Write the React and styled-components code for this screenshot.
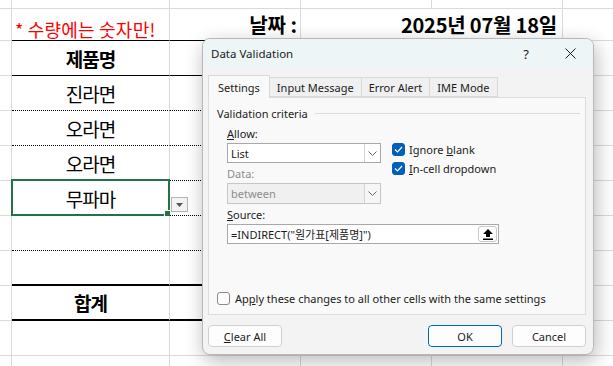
import styled, { createGlobalStyle } from 'styled-components'

const GlobalStyle = createGlobalStyle`
  html, body {
    margin: 0;
    padding: 0;
    background: #fff;
    overflow: hidden;
  }
  #root {
    position: relative;
    width: 613px;
    height: 366px;
    overflow: hidden;
  }
`

const GRID = '#dadada'

const bottoms = {
  grid: `1px solid ${GRID}`,
  thin: '1px solid #000',
  dot: '1px dotted #000',
  thick: '2px solid #000',
}

const Sheet = styled.div`
  display: grid;
  grid-template-columns: 12px 158px 131px 131px 131px 60px;
  grid-template-rows: 9px 32px repeat(9, 35px) 20px;
  font-family: "Noto Sans CJK KR", "Noto Sans", sans-serif;
  color: #000;
`

const Cell = styled.div`
  position: relative;
  box-sizing: border-box;
  grid-column: span ${p => p.$span || 1};
  border-right: 1px solid ${GRID};
  border-bottom: ${p => bottoms[p.$bottom || 'grid']};
  display: flex;
  align-items: ${p => p.$valign || 'center'};
  justify-content: ${p => p.$align || 'center'};
  padding: ${p => p.$pad || '0'};
  font-size: ${p => p.$size || 19}px;
  letter-spacing: ${p => (p.$spacing ?? -1)}px;
  font-weight: ${p => (p.$bold ? 700 : 400)};
  color: ${p => p.$color || '#000'};
  white-space: nowrap;
  line-height: 1;
`

const Selection = styled.div`
  position: absolute;
  top: -2px;
  left: -1px;
  right: -1px;
  bottom: -1px;
  border: 2px solid #217346;
  pointer-events: none;
`

const FillHandle = styled.div`
  position: absolute;
  right: -3px;
  bottom: -3px;
  width: 5px;
  height: 5px;
  background: #217346;
  border: 1px solid #fff;
`

const DropButton = styled.div`
  position: absolute;
  left: calc(100% + 2px);
  bottom: 3px;
  width: 17px;
  height: 15px;
  box-sizing: border-box;
  background: #f3f3f3;
  border: 1px solid #b4b4b4;
  display: flex;
  align-items: center;
  justify-content: center;
`

const Dialog = styled.div`
  position: absolute;
  left: 202px;
  top: 38px;
  width: 392px;
  height: 317px;
  box-sizing: border-box;
  border: 1px solid #b8b8b8;
  border-radius: 8px;
  background: #f3f3f3;
  box-shadow: 2px 6px 20px rgba(0, 0, 0, 0.28);
  display: flex;
  flex-direction: column;
  overflow: hidden;
  font-family: "Segoe UI", "Noto Sans", "Noto Sans CJK KR", sans-serif;
  font-size: 11px;
  color: #1b1b1b;
`

const TitleBar = styled.div`
  height: 29px;
  flex: none;
  background: #edf5f7;
  display: flex;
  align-items: center;
  padding-left: 8px;
  font-size: 11.5px;
`

const Title = styled.span`
  flex: 1;
`

const TitleButton = styled.span`
  width: ${p => p.$w}px;
  height: 29px;
  display: flex;
  align-items: center;
  justify-content: center;
  font-size: 13px;
`

const Body = styled.div`
  flex: 1;
  display: flex;
  flex-direction: column;
  padding: 7px 7px 7px 5px;
`

const Tabs = styled.div`
  display: flex;
  align-items: flex-end;
  height: 22px;
  position: relative;
  z-index: 1;
`

const Tab = styled.div`
  box-sizing: border-box;
  height: ${p => (p.$active ? 23 : 20)}px;
  margin-bottom: ${p => (p.$active ? -1 : 0)}px;
  margin-right: -1px;
  padding: 0 ${p => (p.$active ? 9 : 7)}px;
  border: 1px solid #d9d9d9;
  border-bottom: ${p => (p.$active ? 'none' : '1px solid #d9d9d9')};
  background: ${p => (p.$active ? '#f9f9f9' : '#f0f0f0')};
  display: flex;
  align-items: center;
`

const Panel = styled.div`
  flex: 1;
  box-sizing: border-box;
  background: #f9f9f9;
  border: 1px solid #dcdcdc;
  padding: 5px 5px 9px 8px;
  display: flex;
  flex-direction: column;
`

const Legend = styled.div`
  display: flex;
  align-items: center;
  height: 20px;
  &::after {
    content: '';
    flex: 1;
    border-top: 1px solid #dcdcdc;
    margin-left: 7px;
  }
`

const Criteria = styled.div`
  display: grid;
  grid-template-columns: 154px auto;
  grid-template-rows: 20px 20px 20px 21px 20px 20px;
  column-gap: 11px;
  padding-left: 10px;
`

const Label = styled.div`
  display: flex;
  align-items: center;
  color: ${p => (p.$disabled ? '#8d8d8d' : '#1b1b1b')};
`

const Combo = styled.div`
  box-sizing: border-box;
  display: flex;
  border: 1px solid ${p => (p.$disabled ? '#c6c6c6' : '#a8a8a8')};
  background: ${p => (p.$disabled ? '#f0f0f0' : '#fff')};
  color: ${p => (p.$disabled ? '#8d8d8d' : '#1b1b1b')};
`

const ComboText = styled.span`
  flex: 1;
  display: flex;
  align-items: center;
  padding-left: 3px;
`

const ComboArrow = styled.span`
  width: 16px;
  box-sizing: border-box;
  border-left: 1px solid #d4d4d4;
  background: ${p => (p.$disabled ? '#f6f6f6' : '#fff')};
  display: flex;
  align-items: center;
  justify-content: center;
`

const Checks = styled.div`
  grid-column: 2;
  grid-row: 2 / 4;
  display: flex;
  flex-direction: column;
  gap: 6px;
`

const CheckRow = styled.label`
  display: flex;
  align-items: center;
  gap: 4px;
  height: 13px;
`

const Box = styled.span`
  width: 13px;
  height: 13px;
  box-sizing: border-box;
  border-radius: 3px;
  border: 1px solid ${p => (p.$checked ? '#005fb8' : '#8a8a8a')};
  background: ${p => (p.$checked ? '#005fb8' : '#fdfdfd')};
  display: flex;
  align-items: center;
  justify-content: center;
`

const SourceField = styled.div`
  grid-column: 1 / 3;
  width: 272px;
  box-sizing: border-box;
  display: flex;
  align-items: center;
  border: 1px solid #a8a8a8;
  background: #fff;
  padding: 0 1px 0 3px;
`

const SourceText = styled.span`
  flex: 1;
`

const PickButton = styled.span`
  width: 19px;
  height: 16px;
  box-sizing: border-box;
  border: 1px solid #c8c8c8;
  border-radius: 3px;
  display: flex;
  align-items: center;
  justify-content: center;
`

const ApplyRow = styled(CheckRow)`
  margin-top: auto;
  gap: 5px;
`

const Footer = styled.div`
  display: flex;
  gap: 10px;
  padding-top: 10px;
`

const Button = styled.div`
  width: 74px;
  height: 22px;
  box-sizing: border-box;
  border-radius: 4px;
  background: #fdfdfd;
  border: 1px solid ${p => (p.$primary ? '#0067c0' : '#d0d0d0')};
  display: flex;
  align-items: center;
  justify-content: center;
  margin-left: ${p => (p.$push ? 'auto' : '0')};
`

const rows = [
  { text: '제품명', bold: true, bottom: 'thin' },
  { text: '진라면', bottom: 'dot' },
  { text: '오라면', bottom: 'dot' },
  { text: '오라면', bottom: 'dot' },
  { text: '무파마', bottom: 'dot', selected: true },
  { text: '', bottom: 'dot' },
  { text: '', bottom: 'thick' },
  { text: '합계', bold: true, bottom: 'thick' },
  { text: '', bottom: 'grid' },
]

function Chevron() {
  return (
    <svg width="9" height="5" viewBox="0 0 9 5">
      <path d="M0.5 0.5 L4.5 4.5 L8.5 0.5" fill="none" stroke="#6b6b6b" strokeWidth="1" />
    </svg>
  )
}

function Check() {
  return (
    <svg width="9" height="7" viewBox="0 0 9 7">
      <path d="M1 3.5 L3.5 6 L8 1" fill="none" stroke="#fff" strokeWidth="1.2" />
    </svg>
  )
}

function CheckBox({ checked, children }) {
  return (
    <CheckRow>
      <Box $checked={checked}>{checked && <Check />}</Box>
      <span>{children}</span>
    </CheckRow>
  )
}

export default function App() {
  return (
    <>
      <GlobalStyle />
      <Sheet>
        <Cell /><Cell /><Cell /><Cell /><Cell /><Cell />

        <Cell />
        <Cell $bottom="thin" $align="flex-start" $valign="flex-end" $pad="0 0 2px 3px" $size={18} $spacing={0.2} $color="#ff0000">
          * 수량에는 숫자만!
        </Cell>
        <Cell $bottom="thin" $align="flex-end" $pad="0 3px 0 0" $size={20} $spacing={0} $bold>날짜 :</Cell>
        <Cell $span={2} $bottom="thin" $align="flex-end" $pad="0 5px 0 0" $size={20} $spacing={-0.2} $bold>2025년 07월 18일</Cell>
        <Cell />

        {rows.map((r, i) => (
          <>
            <Cell key={`a${i}`} />
            <Cell key={`b${i}`} $bottom={r.bottom} $bold={r.bold}>
              {r.text}
              {r.selected && (
                <>
                  <Selection><FillHandle /></Selection>
                  <DropButton>
                    <svg width="7" height="4" viewBox="0 0 7 4">
                      <path d="M0 0 H7 L3.5 4 Z" fill="#555" />
                    </svg>
                  </DropButton>
                </>
              )}
            </Cell>
            <Cell key={`c${i}`} $bottom={r.bottom} />
            <Cell key={`d${i}`} $bottom={r.bottom} />
            <Cell key={`e${i}`} $bottom={r.bottom} />
            <Cell key={`f${i}`} />
          </>
        ))}

        <Cell /><Cell /><Cell /><Cell /><Cell /><Cell />
      </Sheet>

      <Dialog>
        <TitleBar>
          <Title>Data Validation</Title>
          <TitleButton $w={42}>?</TitleButton>
          <TitleButton $w={46}>
            <svg width="11" height="11" viewBox="0 0 11 11">
              <path d="M0.5 0.5 L10.5 10.5 M10.5 0.5 L0.5 10.5" stroke="#1b1b1b" strokeWidth="1" />
            </svg>
          </TitleButton>
        </TitleBar>
        <Body>
          <Tabs>
            <Tab $active>Settings</Tab>
            <Tab>Input Message</Tab>
            <Tab>Error Alert</Tab>
            <Tab>IME Mode</Tab>
          </Tabs>
          <Panel>
            <Legend>Validation criteria</Legend>
            <Criteria>
              <Label><span><u>A</u>llow:</span></Label>
              <div />
              <Combo>
                <ComboText>List</ComboText>
                <ComboArrow><Chevron /></ComboArrow>
              </Combo>
              <Checks>
                <CheckBox checked>Ignore <u>b</u>lank</CheckBox>
                <CheckBox checked><u>I</u>n-cell dropdown</CheckBox>
              </Checks>
              <Label $disabled>Data:</Label>
              <Combo $disabled>
                <ComboText>between</ComboText>
                <ComboArrow $disabled><Chevron /></ComboArrow>
              </Combo>
              <div />
              <Label><span><u>S</u>ource:</span></Label>
              <div />
              <SourceField>
                <SourceText>=INDIRECT("원가표[제품명]")</SourceText>
                <PickButton>
                  <svg width="10" height="11" viewBox="0 0 10 11">
                    <path d="M5 0 L10 5 H7 V8 H3 V5 H0 Z" fill="#000" />
                    <rect x="0" y="9.5" width="10" height="1.5" fill="#000" />
                  </svg>
                </PickButton>
              </SourceField>
            </Criteria>
            <ApplyRow>
              <Box />
              <span>Ap<u>p</u>ly these changes to all other cells with the same settings</span>
            </ApplyRow>
          </Panel>
          <Footer>
            <Button><span><u>C</u>lear All</span></Button>
            <Button $primary $push>OK</Button>
            <Button>Cancel</Button>
          </Footer>
        </Body>
      </Dialog>
    </>
  )
}
